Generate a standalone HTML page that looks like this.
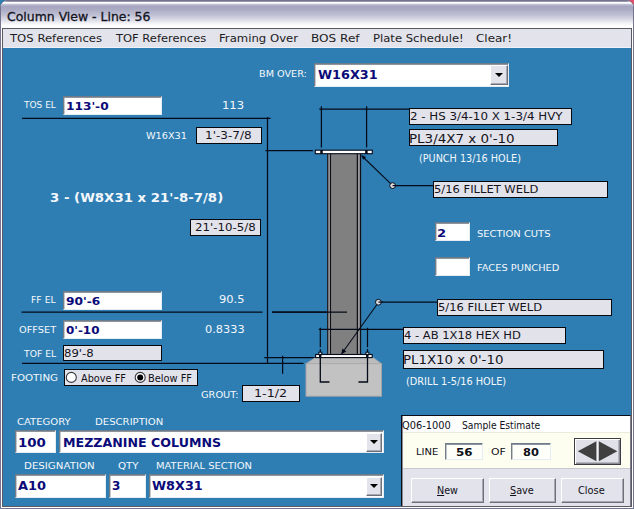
<!DOCTYPE html>
<html><head><meta charset="utf-8"><title>Column View - Line: 56</title>
<style>
html,body{margin:0;padding:0;background:#6e6e72;overflow:hidden}
#win{position:absolute;left:0;top:0;width:634px;height:509px;overflow:hidden;background:#2e7eb3}
.t{position:absolute;white-space:pre;line-height:normal;transform-origin:0 0}
.abs{position:absolute;box-sizing:border-box}
#frame{left:0;top:0;width:634px;height:509px;border:1px solid #747490;border-radius:7px 7px 0 0;background:#fff}
#title{left:1px;top:1px;width:632px;height:27px;border-radius:6px 6px 0 0;background:linear-gradient(#84849e 0px,#9c9cb4 0.7px,#ffffff 1.4px,#fbfbfd 2.2px,#bcbcd2 3.6px,#a5a5c0 5.5px,#ababc4 8.5px,#c0c0d4 14px,#dcdce8 19px,#f3f3f8 22.5px,#ffffff 25px)}
#inner{left:2px;top:28px;width:630px;height:479px;border:1px solid #5a5a66;background:#2e7eb3}
#menu{left:3px;top:29px;width:628px;height:19px;background:#e3e3eb;border-bottom:1px solid #eef0fa}
.in{background:#fff;border:1px solid;border-color:#6c7c8a #e4ecf4 #e4ecf4 #737b84;box-shadow:inset 0 1px 0 #8e959c,inset 1px 0 0 #c4c9ce}
.gb{background:#e2e2ea;border:1px solid #05080c}
.btn{background:#e3e3eb;border:1px solid;border-color:#ffffff #70707a #70707a #ffffff;box-shadow:inset -1px -1px 0 #a8a8b2}
.dd{background:#e3e3eb;border:1px solid;border-color:#ffffff #70707a #70707a #ffffff;box-shadow:inset -1px -1px 0 #a8a8b2}
.dd:after{content:"";position:absolute;left:50%;top:50%;margin:-2px 0 0 -4px;border:4px solid transparent;border-top:4.5px solid #000;border-bottom:0}
</style></head><body>
<div id="win">
<div class="abs" style="left:628px;top:0;width:6px;height:6px;background:#e0506e"></div>
<div class="abs" id="frame"></div>
<div class="abs" id="title"></div>
<div class="abs" id="inner"></div>
<div class="abs" id="menu"></div>

<!-- drawing -->
<svg class="abs" style="left:0;top:0" width="634" height="509" viewBox="0 0 634 509">
<g stroke="#050a18" stroke-width="1.25" fill="none">
<!-- left elevation lines -->
<path d="M22 118.3H270.5"/>
<path d="M267.5 117V363.3"/>
<path d="M265.5 150.5H313"/>
<path d="M21.5 312.1H262.5M272 312.1H347"/>
<path d="M22 363.3H303.5"/>
<path d="M264.3 357.7H315.5"/>
<path d="M282.6 355.8V373.8"/>
</g>
<!-- footing -->
<rect x="306" y="363.5" width="75.5" height="32.7" fill="#c2c2c2" stroke="#a4a4a8" stroke-width="1"/>
<path d="M315.5 357.5H373L381.5 363.7H306Z" fill="#bcbcbc" stroke="#a8a8ac" stroke-width="0.8"/>
<!-- column -->
<rect x="327.2" y="154" width="33.9" height="200.5" fill="#808080"/>
<g stroke="#101018" stroke-width="1.3">
<path d="M327.8 154V354.5M330.4 154V354.5M357.4 154V354.5M360.5 154V354.5"/>
</g>
<g stroke="#a8a8ac" stroke-width="1.1">
<path d="M329.1 154V354.5M358.9 154V354.5"/>
</g>
<g stroke="#050a18" stroke-width="1.25" fill="none">
<path d="M272 312.1H347"/>
<!-- top dim -->
<path d="M319.3 109.2H409.5"/>
<path d="M321.4 106.3V147.6M366.6 106.3V147.6"/>
<!-- bottom dim -->
<path d="M318.8 329.4H403"/>
<path d="M320.3 327.8V347.3M320.3 349V352M367.5 327.8V347.3M367.5 349V352" stroke-width="1.2"/>
<path d="M320.3 357.5V382H329.5M367.5 357.5V382H358.4" stroke-width="1.3"/>
<!-- leaders -->
<path d="M395.5 185.6H433.5"/>
<path d="M381.5 302H437.5"/>
</g>
<g stroke="#050a18" stroke-width="1.1" fill="none">
<path d="M390.4 183.4L362 156"/>
<path d="M376.6 305L341.8 353.5"/>
</g>
<path d="M361.2 155L366 157L363.2 159.8Z" fill="#050a18"/>
<path d="M341.3 354.3L342.3 348.6L346.3 351.4Z" fill="#050a18"/>
<circle cx="392.6" cy="185.6" r="2.9" fill="#dcdce0" stroke="#050a18" stroke-width="1"/><path d="M392.6 185.6H397" stroke="#050a18" stroke-width="1.2"/>
<circle cx="378.4" cy="302.2" r="2.9" fill="#dcdce0" stroke="#050a18" stroke-width="1"/><path d="M378.4 302.1H383" stroke="#050a18" stroke-width="1.2"/>
<!-- plates -->
<rect x="315.3" y="150.2" width="57" height="3.5" fill="#fff" stroke="#050a18" stroke-width="1.1"/>
<path d="M321.5 150V154M366.4 150V154" stroke="#050a18" stroke-width="2.5"/>
<rect x="315.6" y="354.5" width="56.6" height="3.1" fill="#fff" stroke="#050a18" stroke-width="1.1"/>
<path d="M320.2 354.2V358M367.3 354.2V358" stroke="#050a18" stroke-width="2.4"/>
<rect x="318.8" y="352.2" width="3" height="2.4" fill="#e8e8e8" stroke="#050a18" stroke-width="1"/>
<rect x="365.9" y="352.2" width="3" height="2.4" fill="#e8e8e8" stroke="#050a18" stroke-width="1"/>
</svg>

<!-- inputs -->
<div class="abs in" style="left:314px;top:63px;width:195px;height:24px"></div>
<div class="abs dd" style="left:490px;top:65px;width:17.6px;height:20px"></div>
<div class="abs in" style="left:63px;top:96px;width:98.5px;height:19px"></div>
<div class="abs in" style="left:63px;top:291px;width:98.5px;height:18.6px"></div>
<div class="abs in" style="left:63px;top:320px;width:98.5px;height:18.6px"></div>
<div class="abs in" style="left:435px;top:222px;width:35.4px;height:19px"></div>
<div class="abs in" style="left:435px;top:257px;width:35.4px;height:19px"></div>
<div class="abs in" style="left:15px;top:430px;width:40.6px;height:23.4px"></div>
<div class="abs in" style="left:59px;top:430px;width:324.6px;height:23.4px"></div>
<div class="abs dd" style="left:365.6px;top:433px;width:16.2px;height:18.8px"></div>
<div class="abs in" style="left:15px;top:474px;width:91px;height:23.8px"></div>
<div class="abs in" style="left:109px;top:474px;width:37px;height:23.8px"></div>
<div class="abs in" style="left:149px;top:474px;width:234.6px;height:23.8px"></div>
<div class="abs dd" style="left:365.6px;top:477px;width:16.2px;height:18.8px"></div>

<!-- gray boxes -->
<div class="abs gb" style="left:195.6px;top:127px;width:66.5px;height:16.8px"></div>
<div class="abs gb" style="left:190px;top:219.2px;width:70.8px;height:16.6px"></div>
<div class="abs gb" style="left:63px;top:345px;width:98.5px;height:16.4px"></div>
<div class="abs gb" style="left:241.8px;top:385.4px;width:57.8px;height:16.4px"></div>
<div class="abs gb" style="left:409.2px;top:107.9px;width:163px;height:16.7px"></div>
<div class="abs gb" style="left:409.2px;top:129px;width:148.7px;height:16.6px"></div>
<div class="abs gb" style="left:433.3px;top:181px;width:174.6px;height:16.6px"></div>
<div class="abs gb" style="left:437.1px;top:299px;width:174.8px;height:16.5px"></div>
<div class="abs gb" style="left:402.8px;top:327.2px;width:163px;height:16.6px"></div>
<div class="abs gb" style="left:402.8px;top:350.3px;width:201.3px;height:18.4px"></div>
<!-- radio group -->
<div class="abs gb" style="left:64px;top:369px;width:133.6px;height:16.6px"></div>
<svg class="abs" style="left:64px;top:369px" width="134" height="17" viewBox="64 369 134 17">
<circle cx="71.3" cy="377.4" r="5" fill="#fff" stroke="#383840" stroke-width="1.1"/>
<circle cx="140.2" cy="377.4" r="5" fill="#fff" stroke="#383840" stroke-width="1.1"/>
<circle cx="140.2" cy="377.4" r="3" fill="#000"/>
</svg>

<!-- bottom-right panel -->
<div class="abs" style="left:401px;top:415px;width:230px;height:91px;background:#e3e3eb;border-right:1px solid #7c7c8a;border-left:1px solid #0c0d16;border-top:1px solid #0c0d16;box-shadow:inset 1px 1px 0 #8a8a94"></div>
<div class="abs" style="left:402.6px;top:416.4px;width:227.4px;height:16px;background:#ffffff"></div>
<div class="abs" style="left:402.6px;top:432.3px;width:227.4px;height:36.5px;background:#fdfdf0;border-top:1px solid #ececdc;border-bottom:1px solid #c8c8d0"></div>
<div class="abs in" style="left:445px;top:443px;width:38px;height:16.7px;background:#fffffa"></div>
<div class="abs in" style="left:511.4px;top:443px;width:39.6px;height:16.7px;background:#fffffa"></div>
<div class="abs" style="left:574.2px;top:438px;width:46.8px;height:26.8px;background:#e1e1e9;border:1px solid #3c3c44;box-shadow:inset 1px 1px 0 #fff,inset -1.5px -1.5px 0 #8c8c94"></div>
<svg class="abs" style="left:574px;top:438px" width="48" height="27" viewBox="574 438 48 27">
<path d="M577.8 451.2L596.4 441.2V461.2Z" fill="#404040"/>
<path d="M617.3 451.2L598.8 441.2V461.2Z" fill="#404040"/>
<path d="M597.6 440.5V462" stroke="#f4f4f8" stroke-width="1"/>
</svg>
<div class="abs btn" style="left:411px;top:478px;width:73px;height:24.5px"></div>
<div class="abs btn" style="left:489px;top:478px;width:67.4px;height:24.5px"></div>
<div class="abs btn" style="left:561px;top:478px;width:63.4px;height:24.5px"></div>

<span class="t" style="left:6.61px;top:8.70px;font-family:'DejaVu Sans Condensed', 'DejaVu Sans', 'Liberation Sans', sans-serif;font-weight:400;font-size:12.8px;color:#14141e;-webkit-text-stroke:0.3px #14141e;transform:scaleX(1.0812)">Column View - Line: 56</span>
<span class="t" style="left:10.18px;top:31.90px;font-family:'DejaVu Sans', 'Liberation Sans', sans-serif;font-weight:400;font-size:11px;color:#1c1c24;transform:scaleX(1.0588)">TOS References</span>
<span class="t" style="left:116.38px;top:31.90px;font-family:'DejaVu Sans', 'Liberation Sans', sans-serif;font-weight:400;font-size:11px;color:#1c1c24;transform:scaleX(1.0453)">TOF References</span>
<span class="t" style="left:219.04px;top:31.90px;font-family:'DejaVu Sans', 'Liberation Sans', sans-serif;font-weight:400;font-size:11px;color:#1c1c24;transform:scaleX(1.0615)">Framing Over</span>
<span class="t" style="left:311.20px;top:31.90px;font-family:'DejaVu Sans', 'Liberation Sans', sans-serif;font-weight:400;font-size:11px;color:#1c1c24;transform:scaleX(1.0971)">BOS Ref</span>
<span class="t" style="left:372.75px;top:31.90px;font-family:'DejaVu Sans', 'Liberation Sans', sans-serif;font-weight:400;font-size:11px;color:#1c1c24;transform:scaleX(1.0557)">Plate Schedule!</span>
<span class="t" style="left:475.88px;top:31.90px;font-family:'DejaVu Sans', 'Liberation Sans', sans-serif;font-weight:400;font-size:11px;color:#1c1c24;transform:scaleX(1.0870)">Clear!</span>
<span class="t" style="left:258.83px;top:67.60px;font-family:'DejaVu Sans', 'Liberation Sans', sans-serif;font-weight:400;font-size:9.2px;color:#f4f8fc;transform:scaleX(1.0518)">BM OVER:</span>
<span class="t" style="left:24.19px;top:98.70px;font-family:'DejaVu Sans', 'Liberation Sans', sans-serif;font-weight:400;font-size:9.2px;color:#f4f8fc;transform:scaleX(0.9801)">TOS EL</span>
<span class="t" style="left:31.46px;top:293.70px;font-family:'DejaVu Sans', 'Liberation Sans', sans-serif;font-weight:400;font-size:9.2px;color:#f4f8fc;transform:scaleX(1.0101)">FF EL</span>
<span class="t" style="left:19.06px;top:323.80px;font-family:'DejaVu Sans', 'Liberation Sans', sans-serif;font-weight:400;font-size:9.2px;color:#f4f8fc;transform:scaleX(1.0659)">OFFSET</span>
<span class="t" style="left:24.18px;top:347.80px;font-family:'DejaVu Sans', 'Liberation Sans', sans-serif;font-weight:400;font-size:9.2px;color:#f4f8fc;transform:scaleX(1.0063)">TOF EL</span>
<span class="t" style="left:10.67px;top:372.00px;font-family:'DejaVu Sans', 'Liberation Sans', sans-serif;font-weight:400;font-size:9.2px;color:#f4f8fc;transform:scaleX(1.1182)">FOOTING</span>
<span class="t" style="left:200.78px;top:389.00px;font-family:'DejaVu Sans', 'Liberation Sans', sans-serif;font-weight:400;font-size:9.2px;color:#f4f8fc;transform:scaleX(1.0656)">GROUT:</span>
<span class="t" style="left:16.57px;top:415.70px;font-family:'DejaVu Sans', 'Liberation Sans', sans-serif;font-weight:400;font-size:9.2px;color:#f4f8fc;transform:scaleX(1.0916)">CATEGORY</span>
<span class="t" style="left:94.59px;top:415.70px;font-family:'DejaVu Sans', 'Liberation Sans', sans-serif;font-weight:400;font-size:9.2px;color:#f4f8fc;transform:scaleX(1.0991)">DESCRIPTION</span>
<span class="t" style="left:24.37px;top:459.60px;font-family:'DejaVu Sans', 'Liberation Sans', sans-serif;font-weight:400;font-size:9.2px;color:#f4f8fc;transform:scaleX(1.1134)">DESIGNATION</span>
<span class="t" style="left:117.52px;top:459.60px;font-family:'DejaVu Sans', 'Liberation Sans', sans-serif;font-weight:400;font-size:9.2px;color:#f4f8fc;transform:scaleX(1.1186)">QTY</span>
<span class="t" style="left:156.10px;top:459.60px;font-family:'DejaVu Sans', 'Liberation Sans', sans-serif;font-weight:400;font-size:9.2px;color:#f4f8fc;transform:scaleX(1.0811)">MATERIAL SECTION</span>
<span class="t" style="left:476.72px;top:227.80px;font-family:'DejaVu Sans', 'Liberation Sans', sans-serif;font-weight:400;font-size:9.2px;color:#f4f8fc;transform:scaleX(1.0808)">SECTION CUTS</span>
<span class="t" style="left:476.61px;top:261.90px;font-family:'DejaVu Sans', 'Liberation Sans', sans-serif;font-weight:400;font-size:9.2px;color:#f4f8fc;transform:scaleX(1.0712)">FACES PUNCHED</span>
<span class="t" style="left:146.47px;top:130.30px;font-family:'DejaVu Sans', 'Liberation Sans', sans-serif;font-weight:400;font-size:9.2px;color:#f4f8fc;transform:scaleX(1.0552)">W16X31</span>
<span class="t" style="left:222.30px;top:98.70px;font-family:'DejaVu Sans', 'Liberation Sans', sans-serif;font-weight:400;font-size:10.5px;color:#f4f8fc;transform:scaleX(1.1036)">113</span>
<span class="t" style="left:219.02px;top:292.70px;font-family:'DejaVu Sans', 'Liberation Sans', sans-serif;font-weight:400;font-size:10.5px;color:#f4f8fc;transform:scaleX(1.0868)">90.5</span>
<span class="t" style="left:204.91px;top:322.50px;font-family:'DejaVu Sans', 'Liberation Sans', sans-serif;font-weight:400;font-size:10.5px;color:#f4f8fc;transform:scaleX(1.0798)">0.8333</span>
<span class="t" style="left:49.65px;top:190.10px;font-family:'DejaVu Sans', 'Liberation Sans', sans-serif;font-weight:700;font-size:13px;color:#f4f8fc;transform:scaleX(1.0246)">3 - (W8X31 x 21'-8-7/8)</span>
<span class="t" style="left:418.89px;top:151.90px;font-family:'DejaVu Sans Condensed', 'DejaVu Sans', 'Liberation Sans', sans-serif;font-weight:400;font-size:11px;color:#f4f8fc;transform:scaleX(0.9752)">(PUNCH 13/16 HOLE)</span>
<span class="t" style="left:406.48px;top:375.20px;font-family:'DejaVu Sans Condensed', 'DejaVu Sans', 'Liberation Sans', sans-serif;font-weight:400;font-size:11px;color:#f4f8fc;transform:scaleX(0.9864)">(DRILL 1-5/16 HOLE)</span>
<span class="t" style="left:318.27px;top:67.80px;font-family:'DejaVu Sans', 'Liberation Sans', sans-serif;font-weight:700;font-size:12px;color:#0a0a78;transform:scaleX(1.0661)">W16X31</span>
<span class="t" style="left:65.70px;top:100.00px;font-family:'DejaVu Sans', 'Liberation Sans', sans-serif;font-weight:700;font-size:11px;color:#0a0a78;transform:scaleX(1.1060)">113'-0</span>
<span class="t" style="left:66.00px;top:294.80px;font-family:'DejaVu Sans', 'Liberation Sans', sans-serif;font-weight:700;font-size:11px;color:#0a0a78;transform:scaleX(1.1103)">90'-6</span>
<span class="t" style="left:66.05px;top:323.60px;font-family:'DejaVu Sans', 'Liberation Sans', sans-serif;font-weight:700;font-size:11px;color:#0a0a78;transform:scaleX(1.0822)">0'-10</span>
<span class="t" style="left:17.59px;top:435.70px;font-family:'DejaVu Sans', 'Liberation Sans', sans-serif;font-weight:700;font-size:12px;color:#0a0a78;transform:scaleX(1.1140)">100</span>
<span class="t" style="left:63.33px;top:435.70px;font-family:'DejaVu Sans', 'Liberation Sans', sans-serif;font-weight:700;font-size:12px;color:#0a0a78;transform:scaleX(1.0514)">MEZZANINE COLUMNS</span>
<span class="t" style="left:17.86px;top:478.80px;font-family:'DejaVu Sans', 'Liberation Sans', sans-serif;font-weight:700;font-size:12px;color:#0a0a78;transform:scaleX(1.0795)">A10</span>
<span class="t" style="left:112.23px;top:478.80px;font-family:'DejaVu Sans', 'Liberation Sans', sans-serif;font-weight:700;font-size:12px;color:#0a0a78;transform:scaleX(1.0038)">3</span>
<span class="t" style="left:152.47px;top:478.80px;font-family:'DejaVu Sans', 'Liberation Sans', sans-serif;font-weight:700;font-size:12px;color:#0a0a78;transform:scaleX(1.0666)">W8X31</span>
<span class="t" style="left:437.41px;top:226.60px;font-family:'DejaVu Sans', 'Liberation Sans', sans-serif;font-weight:700;font-size:11px;color:#0a0a78;transform:scaleX(1.1990)">2</span>
<span class="t" style="left:455.50px;top:446.00px;font-family:'DejaVu Sans', 'Liberation Sans', sans-serif;font-weight:700;font-size:11px;color:#101018;transform:scaleX(1.0825)">56</span>
<span class="t" style="left:523.26px;top:446.00px;font-family:'DejaVu Sans', 'Liberation Sans', sans-serif;font-weight:700;font-size:11px;color:#101018;transform:scaleX(1.0336)">80</span>
<span class="t" style="left:205.46px;top:129.00px;font-family:'DejaVu Sans', 'Liberation Sans', sans-serif;font-weight:400;font-size:11px;color:#14141c;transform:scaleX(1.0947)">1'-3-7/8</span>
<span class="t" style="left:194.78px;top:221.10px;font-family:'DejaVu Sans', 'Liberation Sans', sans-serif;font-weight:400;font-size:11px;color:#14141c;transform:scaleX(1.0708)">21'-10-5/8</span>
<span class="t" style="left:63.79px;top:346.80px;font-family:'DejaVu Sans', 'Liberation Sans', sans-serif;font-weight:400;font-size:11px;color:#14141c;transform:scaleX(1.0583)">89'-8</span>
<span class="t" style="left:254.08px;top:387.00px;font-family:'DejaVu Sans', 'Liberation Sans', sans-serif;font-weight:400;font-size:11px;color:#14141c;transform:scaleX(1.1525)">1-1/2</span>
<span class="t" style="left:409.77px;top:110.00px;font-family:'DejaVu Sans', 'Liberation Sans', sans-serif;font-weight:400;font-size:11px;color:#14141c;transform:scaleX(1.0768)">2 - HS 3/4-10 X 1-3/4 HVY</span>
<span class="t" style="left:409.21px;top:131.00px;font-family:'DejaVu Sans', 'Liberation Sans', sans-serif;font-weight:400;font-size:13px;color:#14141c;transform:scaleX(1.0337)">PL3/4X7 x 0'-10</span>
<span class="t" style="left:433.73px;top:183.20px;font-family:'DejaVu Sans', 'Liberation Sans', sans-serif;font-weight:400;font-size:11px;color:#14141c;transform:scaleX(1.0472)">5/16 FILLET WELD</span>
<span class="t" style="left:437.73px;top:301.00px;font-family:'DejaVu Sans', 'Liberation Sans', sans-serif;font-weight:400;font-size:11px;color:#14141c;transform:scaleX(1.0452)">5/16 FILLET WELD</span>
<span class="t" style="left:403.90px;top:329.30px;font-family:'DejaVu Sans', 'Liberation Sans', sans-serif;font-weight:400;font-size:11px;color:#14141c;transform:scaleX(1.0481)">4 - AB 1X18 HEX HD</span>
<span class="t" style="left:403.12px;top:352.20px;font-family:'DejaVu Sans', 'Liberation Sans', sans-serif;font-weight:400;font-size:13px;color:#14141c;transform:scaleX(1.0263)">PL1X10 x 0'-10</span>
<span class="t" style="left:80.95px;top:371.70px;font-family:'DejaVu Sans Condensed', 'DejaVu Sans', 'Liberation Sans', sans-serif;font-weight:400;font-size:11px;color:#101018;transform:scaleX(0.9845)">Above FF</span>
<span class="t" style="left:148.49px;top:371.70px;font-family:'DejaVu Sans Condensed', 'DejaVu Sans', 'Liberation Sans', sans-serif;font-weight:400;font-size:11px;color:#101018;transform:scaleX(0.9912)">Below FF</span>
<span class="t" style="left:402.07px;top:419.20px;font-family:'DejaVu Sans Condensed', 'DejaVu Sans', 'Liberation Sans', sans-serif;font-weight:400;font-size:11px;color:#101018;transform:scaleX(0.9941)">Q06-1000</span>
<span class="t" style="left:462.33px;top:419.20px;font-family:'DejaVu Sans Condensed', 'DejaVu Sans', 'Liberation Sans', sans-serif;font-weight:400;font-size:11px;color:#101018;transform:scaleX(0.9314)">Sample Estimate</span>
<span class="t" style="left:416.30px;top:446.00px;font-family:'DejaVu Sans', 'Liberation Sans', sans-serif;font-weight:400;font-size:9.2px;color:#101018;transform:scaleX(1.0868)">LINE</span>
<span class="t" style="left:491.49px;top:446.00px;font-family:'DejaVu Sans', 'Liberation Sans', sans-serif;font-weight:400;font-size:9.2px;color:#101018;transform:scaleX(1.1800)">OF</span>
<span class="t" style="left:437.00px;top:484.00px;font-family:'DejaVu Sans Condensed', 'DejaVu Sans', 'Liberation Sans', sans-serif;font-weight:400;font-size:11px;color:#101018;transform:scaleX(0.9710)"><u>N</u>ew</span>
<span class="t" style="left:510.00px;top:484.00px;font-family:'DejaVu Sans Condensed', 'DejaVu Sans', 'Liberation Sans', sans-serif;font-weight:400;font-size:11px;color:#101018;transform:scaleX(0.9803)"><u>S</u>ave</span>
<span class="t" style="left:578.17px;top:484.00px;font-family:'DejaVu Sans Condensed', 'DejaVu Sans', 'Liberation Sans', sans-serif;font-weight:400;font-size:11px;color:#101018;transform:scaleX(0.9902)">Close</span>
</div>
</body></html>
